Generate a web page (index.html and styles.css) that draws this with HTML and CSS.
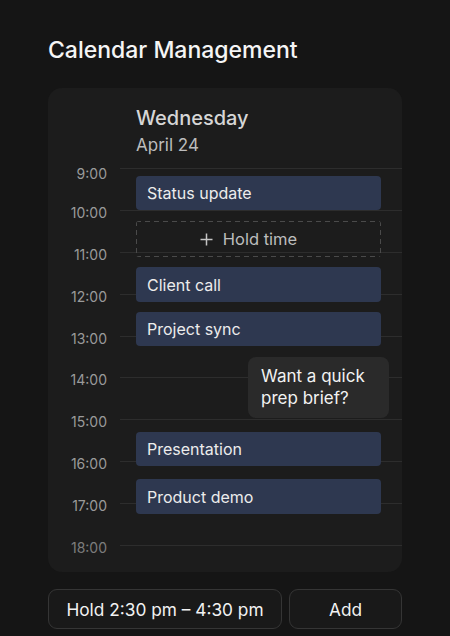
FILE: index.html
```html
<!DOCTYPE html>
<html lang="en">
<head>
<meta charset="utf-8">
<title>Calendar Management</title>
<link rel="stylesheet" href="styles.css">
</head>
<body>
<main class="page">
  <h1 class="title">Calendar Management</h1>
  <section class="card">
    <header class="day">
      <div class="day-name">Wednesday</div>
      <div class="day-date">April 24</div>
    </header>
    <div class="timeline">
      <div class="hours">
        <div class="hour"><span class="hour-label first">9:00</span><span class="hour-line"></span></div>
        <div class="hour"><span class="hour-label">10:00</span><span class="hour-line"></span></div>
        <div class="hour"><span class="hour-label">11:00</span><span class="hour-line"></span></div>
        <div class="hour"><span class="hour-label">12:00</span><span class="hour-line"></span></div>
        <div class="hour"><span class="hour-label">13:00</span><span class="hour-line"></span></div>
        <div class="hour"><span class="hour-label">14:00</span><span class="hour-line"></span></div>
        <div class="hour"><span class="hour-label">15:00</span><span class="hour-line"></span></div>
        <div class="hour"><span class="hour-label">16:00</span><span class="hour-line"></span></div>
        <div class="hour"><span class="hour-label">17:00</span><span class="hour-line"></span></div>
        <div class="hour hour-last"><span class="hour-label dim">18:00</span><span class="hour-line"></span></div>
      </div>
      <div class="events">
        <div class="event" style="top:8px;height:34px">Status update</div>
        <div class="hold" style="top:53px;height:36px">
          <svg class="plus" width="13" height="13" viewBox="0 0 13 13"><path d="M6.5 0.5v12M0.5 6.5h12" stroke="currentColor" stroke-width="1.5" fill="none"/></svg>
          <span>Hold time</span>
        </div>
        <div class="event" style="top:99px;height:35px">Client call</div>
        <div class="event" style="top:144px;height:34px">Project sync</div>
        <div class="event" style="top:264px;height:34px">Presentation</div>
        <div class="event" style="top:311px;height:35px">Product demo</div>
      </div>
      <div class="tip">Want a quick<br>prep brief?</div>
    </div>
  </section>
  <div class="actions">
    <button class="btn btn-hold">Hold 2:30 pm – 4:30 pm</button>
    <button class="btn btn-add">Add</button>
  </div>
</main>
</body>
</html>
```

FILE: styles.css
```css
* { box-sizing: border-box; }
html, body {
  margin: 0;
  padding: 0;
  background: #151515;
}
body {
  font-family: Inter, "Noto Sans", "Liberation Sans", sans-serif;
  color: #f2f2f2;
  width: 450px;
  height: 636px;
  overflow: hidden;
}
.page {
  padding: 36px 48px 0 48px;
}
.title {
  margin: 0;
  font-size: 23px;
  line-height: 28px;
  font-weight: 500;
  color: #f5f5f5;
  letter-spacing: 0;
}
.card {
  margin-top: 24px;
  height: 484px;
  background: #1c1c1c;
  border-radius: 14px;
  padding-top: 17px;
}
.day {
  margin-left: 88px;
}
.day-name {
  font-size: 20px;
  line-height: 26px;
  font-weight: 500;
  color: #d6d6d6;
}
.day-date {
  margin-top: 3px;
  font-size: 17px;
  line-height: 22px;
  color: #bcbcbc;
}
.timeline {
  position: relative;
  margin-top: 12px;
}
.hours {
  display: flex;
  flex-direction: column;
}
.hour {
  display: grid;
  grid-template-columns: 59px 1fr;
  column-gap: 13px;
  height: 41.9px;
}
.hour-last {
  height: 27px;
}
.hour-line {
  border-top: 1px solid #2d2d2d;
}
.hour-label {
  text-align: right;
  font-size: 14px;
  line-height: 18px;
  margin-top: -6px;
  color: #9a9a9a;
}
.hour-label.first {
  margin-top: -3px;
}
.hour-label.dim {
  color: #7c7c7c;
}
.events {
  position: absolute;
  top: 0;
  bottom: 0;
  left: 88px;
  right: 21px;
}
.event {
  position: absolute;
  left: 0;
  right: 0;
  display: flex;
  align-items: center;
  padding-left: 11px;
  background: #2e3850;
  border-radius: 4px;
  font-size: 16px;
  color: #ececec;
}
.hold {
  position: absolute;
  left: 0;
  right: 0;
  display: flex;
  align-items: center;
  justify-content: center;
  gap: 10px;
  padding-right: 20px;
  border-radius: 3px;
  font-size: 16.5px;
  color: #bdbdbd;
  background:
    repeating-linear-gradient(90deg, #4a4a4a 0 5px, transparent 5px 9px) left top / 100% 1px no-repeat,
    repeating-linear-gradient(90deg, #4a4a4a 0 5px, transparent 5px 9px) left bottom / 100% 1px no-repeat,
    repeating-linear-gradient(180deg, #4a4a4a 0 5px, transparent 5px 9px) left top / 1px 100% no-repeat,
    repeating-linear-gradient(180deg, #4a4a4a 0 5px, transparent 5px 9px) right top / 1px 100% no-repeat;
}
.plus {
  display: block;
  color: #c4c4c4;
}
.tip {
  position: absolute;
  top: 189px;
  left: 200px;
  width: 141px;
  height: 61px;
  padding: 8px 0 0 13px;
  background: #2a2a2a;
  border-radius: 8px;
  font-size: 17px;
  line-height: 22px;
  color: #f2f2f2;
}
.actions {
  margin-top: 17px;
  display: flex;
  gap: 7px;
}
.btn {
  height: 40px;
  border: 1px solid #353535;
  border-radius: 9px;
  background: #191919;
  color: #f2f2f2;
  font-family: Inter, "Noto Sans", "Liberation Sans", sans-serif;
  font-size: 17.3px;
  padding: 0;
}
.btn-hold {
  width: 234px;
}
.btn-add {
  flex: 1;
}
```
